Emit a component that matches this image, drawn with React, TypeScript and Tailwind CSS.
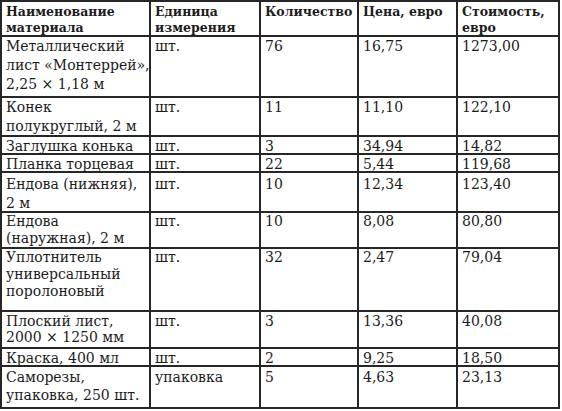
import React from "react";

type Row = { h: number; pt: number; lh: number; cells: string[][] };

const rows: Row[] = [
  { h: 59, pt: 0, lh: 19, cells: [["Металлический", "лист «Монтеррей»,", "2,25 × 1,18 м"], ["шт."], ["76"], ["16,75"], ["1273,00"]] },
  { h: 37, pt: 0, lh: 19, cells: [["Конек", "полукруглый, 2 м"], ["шт."], ["11"], ["11,10"], ["122,10"]] },
  { h: 16, pt: 1, lh: 16, cells: [["Заглушка конька"], ["шт."], ["3"], ["34,94"], ["14,82"]] },
  { h: 16, pt: 1, lh: 16, cells: [["Планка торцевая"], ["шт."], ["22"], ["5,44"], ["119,68"]] },
  { h: 38, pt: 2, lh: 19, cells: [["Ендова (нижняя),", "2 м"], ["шт."], ["10"], ["12,34"], ["123,40"]] },
  { h: 34, pt: 0, lh: 17, cells: [["Ендова", "(наружная), 2 м"], ["шт."], ["10"], ["8,08"], ["80,80"]] },
  { h: 61, pt: 0, lh: 17, cells: [["Уплотнитель", "универсальный", "поролоновый"], ["шт."], ["32"], ["2,47"], ["79,04"]] },
  { h: 35, pt: 1, lh: 16, cells: [["Плоский лист,", "2000 × 1250 мм"], ["шт."], ["3"], ["13,36"], ["40,08"]] },
  { h: 16, pt: 1, lh: 16, cells: [["Краска, 400 мл"], ["шт."], ["2"], ["9,25"], ["18,50"]] },
  { h: 40, pt: 1, lh: 18, cells: [["Саморезы,", "упаковка, 250 шт."], ["упаковка"], ["5"], ["4,63"], ["23,13"]] },
];

const headers = [["Наименование", "материала"], ["Единица", "измерения"], ["Количество"], ["Цена, евро"], ["Стоимость,", "евро"]];

export default function App() {
  return (
    <div className="w-[562px] h-[411px] bg-white" style={{ fontFamily: '"DejaVu Serif", "Liberation Serif", serif' }}>
      <div className="grid w-[560px] grid-cols-[147px_108px_96px_97px_100px] gap-[2px] bg-[#262626] border-2 border-[#262626] text-[#1c1c1c]">
        {headers.map((c, i) => (
          <div key={i} className="bg-white h-[33px] px-[4px] pt-[2px] font-bold text-[12.5px] leading-[16px]">
            {c.map((l, j) => (
              <div key={j} className="whitespace-nowrap">{l}</div>
            ))}
          </div>
        ))}
        {rows.map((r, ri) =>
          r.cells.map((c, i) => (
            <div key={ri + "-" + i} className="bg-white px-[4px] text-[14px]" style={{ height: r.h, paddingTop: r.pt, lineHeight: r.lh + "px" }}>
              {c.map((l, j) => (
                <div key={j} className="whitespace-nowrap">{l}</div>
              ))}
            </div>
          ))
        )}
      </div>
    </div>
  );
}
